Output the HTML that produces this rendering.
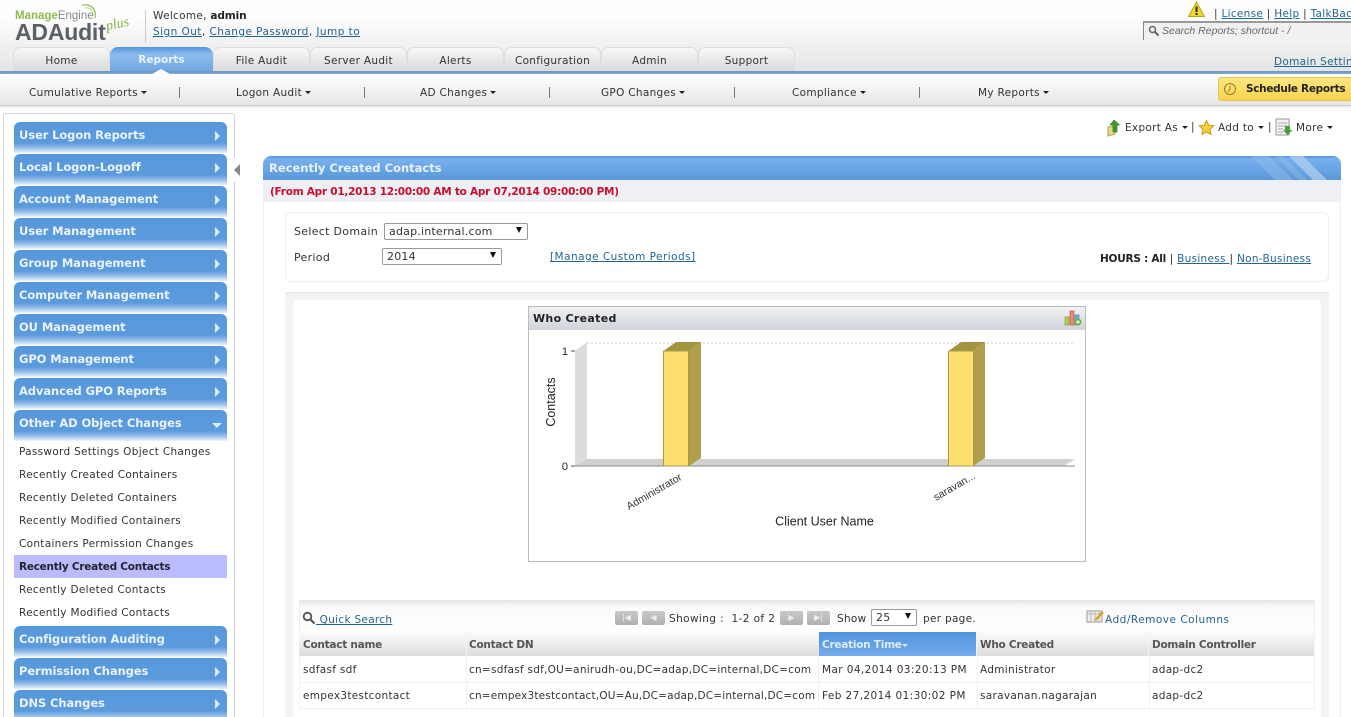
<!DOCTYPE html>
<html><head><meta charset="utf-8"><style>
html,body{margin:0;padding:0;width:1351px;height:717px;overflow:hidden;background:#fff}
body{font-family:"DejaVu Sans",Verdana,sans-serif;font-size:10.5px;color:#333;position:relative;letter-spacing:.3px}
svg{letter-spacing:0}
.a,.t{position:absolute}
.t{white-space:nowrap;line-height:14px}
a,.l{color:#24658f;text-decoration:underline}
.tab{position:absolute;top:47px;height:24px;width:95px;border:1px solid #ddd;border-bottom:0;border-radius:7px 7px 0 0;background:linear-gradient(#f8f8f8,#d8d8d8);text-align:center;line-height:27px;color:#333;box-sizing:content-box}
.nv{position:absolute;left:14px;width:213px;height:31px;border-radius:6px 6px 0 0;background:linear-gradient(#5797dc 0,#5b9bdd 68%,#9cc3ea 85%,#eef5fc 100%);color:#eaf3fc;font-weight:bold;font-size:11.5px;line-height:26px;text-indent:5px;letter-spacing:-.1px}
.nv:after{content:"";position:absolute;right:7px;top:9px;border-left:5px solid #dcebf8;border-top:5px solid transparent;border-bottom:5px solid transparent}
.sub{position:absolute;left:19px;white-space:nowrap;color:#333;line-height:14px}
.nt{position:absolute;top:86px;white-space:nowrap;line-height:14px;color:#333}
.nt b,.ar{display:inline-block;border-top:3px solid #222;border-left:3px solid transparent;border-right:3px solid transparent;vertical-align:2px;margin-left:3px;font-size:0}
.sep{position:absolute;top:87px;height:11px;width:1px;background:#777}
.hd{position:absolute;top:632px;height:24px;background:linear-gradient(#fbfbfb,#dedede);font-weight:bold;color:#555;line-height:27px;text-indent:3px;border-right:1px solid #f3f3f3;box-sizing:border-box;letter-spacing:-.25px}
.cell{position:absolute;white-space:nowrap;line-height:14px;color:#333}
.sel{position:absolute;box-sizing:border-box;background:#fff;border:1px solid #999;border-radius:2px;height:17px;line-height:16px;font-size:11px;padding-left:4px;color:#333;letter-spacing:.2px}
.sel:after{content:"";position:absolute;right:5px;top:3px;border-top:6px solid #111;border-left:3px solid transparent;border-right:3px solid transparent}
.pg{position:absolute;top:611px;width:23px;height:14px;background:linear-gradient(#c9c9c9,#b0b0b0);border-radius:2px;color:#eee;font-size:8px;line-height:14px;text-align:center;letter-spacing:0}
</style></head><body>

<div class="a" style="left:0;top:0;width:1351px;height:72px;background:linear-gradient(#fff 0,#fdfdfd 25%,#e4e4e4 100%)"></div>

<!-- logo -->
<div class="t" style="left:15px;top:9px;font:bold 11.5px/14px 'Liberation Sans',sans-serif;color:#8fba4e;letter-spacing:0">Manage<span style="font-weight:normal;color:#888">Engine</span></div>
<svg class="a" style="left:78px;top:2px" width="24" height="20"><path d="M4 3C12 2 19 6 17 16" fill="none" stroke="#8fba4e" stroke-width="1.2"/><path d="M7 6C12 5 15 8 15 13" fill="none" stroke="#b9d48a" stroke-width="1"/></svg>
<div class="t" style="left:15px;top:20px;font:bold 23px/24px 'Liberation Sans',sans-serif;color:#5b6068;letter-spacing:-.2px">ADAudit</div>
<div class="t" style="left:106px;top:18px;font:italic 14px/14px 'Liberation Serif',serif;color:#86b344;transform:rotate(-12deg);letter-spacing:0">plus</div>
<div class="a" style="left:145px;top:10px;width:1px;height:33px;background:#ccc"></div>

<div class="t" style="left:153px;top:9px">Welcome, <b style="color:#222;letter-spacing:-.1px">admin</b></div>
<div class="t" style="left:153px;top:25px;color:#333;letter-spacing:.45px"><a>Sign Out</a>, <a>Change Password</a>, <a>Jump to</a></div>

<!-- top right -->
<svg class="a" style="left:1188px;top:1px" width="18" height="17"><path d="M8.500 1L16.500 15.500H.5Z" fill="#f2d72c" stroke="#b9a21d"/><rect x="7.600" y="5.500" width="1.900" height="5.500" fill="#222"/><rect x="7.600" y="12" width="1.900" height="2" fill="#222"/></svg>
<div class="t" style="left:1214px;top:7px">| <a>License</a> | <a>Help</a> | <a>TalkBack</a></div>
<div class="a" style="left:1143px;top:21px;width:208px;height:19px;box-sizing:border-box;border-left:1px solid #888;border-top:2px solid #999;background:#f1f1f1"></div>
<svg class="a" style="left:1148px;top:25px" width="12" height="12"><circle cx="4.500" cy="4.500" r="3" fill="none" stroke="#666" stroke-width="1.500"/><path d="M7 7L10.500 10.500" stroke="#666" stroke-width="2"/></svg>
<div class="t" style="left:1162px;top:24px;font:italic 10.5px/14px 'Liberation Sans',sans-serif;color:#666;letter-spacing:0">Search Reports; shortcut - /</div>
<div class="t l" style="left:1274px;top:55px">Domain Settings</div>

<!-- tabs -->
<div class="tab" style="left:13px">Home</div>
<div class="tab" style="left:213px">File Audit</div>
<div class="tab" style="left:310px">Server Audit</div>
<div class="tab" style="left:407px">Alerts</div>
<div class="tab" style="left:504px">Configuration</div>
<div class="tab" style="left:601px">Admin</div>
<div class="tab" style="left:698px">Support</div>
<div class="a" style="left:110px;top:47px;width:103px;height:25px;border-radius:8px 8px 0 0;background:linear-gradient(#4f95dc,#8dbcee 30%,#6fa6e0);text-align:center;line-height:27px;color:#e8f2fc;font-weight:bold;letter-spacing:0">Reports</div>

<div class="a" style="left:0;top:71px;width:1351px;height:3px;background:#6d9ac8"></div>
<div class="a" style="left:152px;top:69px;border-bottom:5px solid #fff;border-left:9px solid transparent;border-right:9px solid transparent"></div>

<!-- subnav -->
<div class="a" style="left:0;top:74px;width:1351px;height:31px;background:linear-gradient(#fff,#e6e6e6);border-bottom:1px solid #ccc;box-shadow:0 1px 3px #ddd"></div>
<div class="nt" style="left:29px">Cumulative Reports<b></b></div><div class="sep" style="left:179px"></div>
<div class="nt" style="left:236px">Logon Audit<b></b></div><div class="sep" style="left:364px"></div>
<div class="nt" style="left:420px">AD Changes<b></b></div><div class="sep" style="left:549px"></div>
<div class="nt" style="left:601px">GPO Changes<b></b></div><div class="sep" style="left:734px"></div>
<div class="nt" style="left:792px">Compliance<b></b></div><div class="sep" style="left:919px"></div>
<div class="nt" style="left:978px">My Reports<b></b></div>

<div class="a" style="left:1218px;top:77px;width:133px;height:24px;box-sizing:border-box;background:linear-gradient(#fde680,#fbd34e);border:1px solid #e5c354;border-right:0;border-radius:3px 0 0 3px"></div>
<svg class="a" style="left:1223px;top:82px" width="14" height="14"><circle cx="7" cy="7" r="5.500" fill="none" stroke="#9a7d1c"/><path d="M7 3.500V7L5 10" fill="none" stroke="#9a7d1c"/></svg>
<div class="t" style="left:1246px;top:82px;font-weight:bold;color:#222;letter-spacing:-.3px">Schedule Reports</div>

<!-- sidebar -->
<div class="a" style="left:3px;top:113px;width:232px;height:620px;box-sizing:border-box;border:1px solid #d2d2d2;border-radius:3px"></div>
<div class="a" style="left:231px;top:158px;width:9px;height:24px;background:#fff"></div>
<div class="a" style="left:234px;top:164px;border-right:6px solid #888;border-top:6px solid transparent;border-bottom:6px solid transparent"></div>

<div class="nv" style="top:122px">User Logon Reports</div>
<div class="nv" style="top:154px">Local Logon-Logoff</div>
<div class="nv" style="top:186px">Account Management</div>
<div class="nv" style="top:218px">User Management</div>
<div class="nv" style="top:250px">Group Management</div>
<div class="nv" style="top:282px">Computer Management</div>
<div class="nv" style="top:314px">OU Management</div>
<div class="nv" style="top:346px">GPO Management</div>
<div class="nv" style="top:378px">Advanced GPO Reports</div>
<div class="nv" style="top:410px">Other AD Object Changes</div>
<div class="a" style="left:212px;top:423px;border-top:5px solid #dcebf8;border-left:5px solid transparent;border-right:5px solid transparent;z-index:3"></div>
<div class="a" style="left:214px;top:416px;width:12px;height:12px;background:#5b9bdd;z-index:2"></div>

<div class="sub" style="top:445px">Password Settings Object Changes</div>
<div class="sub" style="top:468px">Recently Created Containers</div>
<div class="sub" style="top:491px">Recently Deleted Containers</div>
<div class="sub" style="top:514px">Recently Modified Containers</div>
<div class="sub" style="top:537px">Containers Permission Changes</div>
<div class="a" style="left:14px;top:555px;width:213px;height:23px;background:#bbbcfd"></div>
<div class="sub" style="top:560px;font-weight:bold;color:#223;letter-spacing:-.25px">Recently Created Contacts</div>
<div class="sub" style="top:583px">Recently Deleted Contacts</div>
<div class="sub" style="top:606px">Recently Modified Contacts</div>

<div class="nv" style="top:626px">Configuration Auditing</div>
<div class="nv" style="top:658px">Permission Changes</div>
<div class="nv" style="top:690px">DNS Changes</div>

<!-- actions -->
<svg class="a" style="left:1106px;top:119px" width="16" height="18"><path d="M2 8L9 7 9 15 2 17Z" fill="#e8d98a" stroke="#b5a33e"/><path d="M8 1L13.500 6H11V13H7V6H4Z" fill="#3f9b2c" stroke="#2a6d1d" stroke-width=".6"/></svg>
<div class="t" style="left:1125px;top:121px">Export As<span class="ar" style="margin-left:4px"></span></div>
<div class="t" style="left:1191px;top:120px">|</div>
<svg class="a" style="left:1198px;top:119px" width="17" height="17"><path d="M8.500 1.500L10.700 6.200 15.800 6.800 12 10.300 13 15.400 8.500 12.900 4 15.400 5 10.300 1.200 6.800 6.300 6.200Z" fill="#f6cf3d" stroke="#c79a1e"/></svg>
<div class="t" style="left:1218px;top:121px">Add to<span class="ar" style="margin-left:4px"></span></div>
<div class="t" style="left:1268px;top:120px">|</div>
<svg class="a" style="left:1275px;top:118px" width="18" height="18"><rect x="1" y="1" width="13" height="16" fill="#f3f3f3" stroke="#999"/><path d="M3 5H12M3 8H12M3 11H8M3 14H8" stroke="#aaa"/><path d="M10 8H15V12H17.500L12.500 17 8 12H10Z" fill="#4f9b35"/></svg>
<div class="t" style="left:1296px;top:121px">More<span class="ar" style="margin-left:4px"></span></div>

<!-- panel -->
<div class="a" style="left:263px;top:156px;width:1078px;height:24px;border-radius:8px 8px 0 0;background:linear-gradient(#4f94dd 0,#79b0ee 12%,#5a98da 100%);overflow:hidden;color:#e8f1fa;font-weight:bold;font-size:11.5px;line-height:25px;text-indent:6px;letter-spacing:0">Recently Created Contacts
<svg style="position:absolute;left:980px;top:0" width="98" height="24"><path d="M8 0H26L50 24H32Z" fill="#8bb9e8" opacity=".55"/><path d="M32 0H40L64 24H56Z" fill="#8bb9e8" opacity=".5"/><path d="M46 0H60L84 24H70Z" fill="#b5d2f0" opacity=".7"/></svg></div>
<div class="a" style="left:263px;top:180px;width:1078px;height:22px;background:#eef0f5"></div>
<div class="t" style="left:270px;top:185px;font-weight:bold;color:#c8102e;font-size:10.5px;letter-spacing:-.25px">(From Apr 01,2013 12:00:00 AM to Apr 07,2014 09:00:00 PM)</div>
<div class="a" style="left:263px;top:202px;width:1px;height:515px;background:#eee"></div>
<div class="a" style="left:1340px;top:202px;width:1px;height:515px;background:#eee"></div>

<!-- filter -->
<div class="a" style="left:285px;top:212px;width:1044px;height:70px;box-sizing:border-box;border:1px solid #eee;border-radius:6px"></div>
<div class="t" style="left:294px;top:225px;font-size:11px">Select Domain</div>
<div class="sel" style="left:384px;top:223px;width:144px">adap.internal.com</div>
<div class="t" style="left:294px;top:251px;font-size:11px">Period</div>
<div class="sel" style="left:382px;top:248px;width:120px">2014</div>
<div class="t l" style="left:550px;top:250px;letter-spacing:.46px">[Manage Custom Periods]</div>
<div class="t" style="left:1100px;top:252px;color:#222"><b style="letter-spacing:-.25px">HOURS : All</b> | <a>Business </a> | <a>Non-Business </a></div>

<!-- content -->
<div class="a" style="left:285px;top:292px;width:1044px;height:425px;background:#f3f3f3;border-top:1px solid #e8e8e8"></div>
<div class="a" style="left:293px;top:300px;width:1028px;height:417px;background:#fff;border-radius:5px 5px 0 0"></div>

<!-- chart box -->
<div class="a" style="left:528px;top:306px;width:558px;height:256px;box-sizing:border-box;border:1px solid #bbb;background:#fff"></div>
<div class="a" style="left:529px;top:307px;width:556px;height:23px;background:linear-gradient(#f1f2f4,#cfd4db)"></div>
<div class="t" style="left:533px;top:312px;font-weight:bold;color:#222;font-size:11px">Who Created</div>
<svg class="a" style="left:1064px;top:309px" width="18" height="17"><rect x="1" y="8" width="4" height="8" fill="#b7cc55" stroke="#7c8f2c" stroke-width=".6"/><rect x="6" y="2" width="4" height="14" fill="#e98a7a" stroke="#b24b3b" stroke-width=".6"/><rect x="11" y="6" width="4" height="10" fill="#6eb3dc" stroke="#3a7ba1" stroke-width=".6"/><circle cx="14" cy="13" r="3.500" fill="#6db33f"/><path d="M14 11V15M12 13H16" stroke="#fff"/></svg>

<svg class="a" style="left:528px;top:306px" width="558" height="256" font-family="Liberation Sans, sans-serif">
<g transform="translate(-528,-306)">
<path d="M575 351L587 342V459L575 466Z" fill="#dcdcdc"/>
<path d="M575 466L587 459H1075L1064 466Z" fill="#d0d0d0"/>
<path d="M587 343H1075" stroke="#ccc" stroke-dasharray="2 2" fill="none"/>
<path d="M575 466H1075" stroke="#888" fill="none"/>
<path d="M571 351H575M571 466H575" stroke="#555" fill="none"/>
<path d="M663.500 351L676 342H701L689 351Z" fill="#a39440"/>
<path d="M689 351L701 342V458L689 466Z" fill="#b09e4b"/>
<rect x="663.500" y="351" width="25" height="115" fill="#fde070" stroke="#a89a4c"/>
<path d="M948.500 351L961 342H985L973 351Z" fill="#a39440"/>
<path d="M973 351L985 342V458L973 466Z" fill="#b09e4b"/>
<rect x="948.500" y="351" width="25" height="115" fill="#fde070" stroke="#a89a4c"/>
<text x="568" y="355" font-size="11" text-anchor="end" fill="#222">1</text>
<text x="568" y="470" font-size="11" text-anchor="end" fill="#222">0</text>
<text transform="translate(555,402) rotate(-90)" font-size="12.500" text-anchor="middle" fill="#222">Contacts</text>
<text x="824.500" y="525.500" font-size="12.500" text-anchor="middle" fill="#222">Client User Name</text>
<text transform="translate(629,510) rotate(-30)" font-size="10.500" fill="#333">Administrator</text>
<text transform="translate(936,501) rotate(-30)" font-size="10.500" fill="#333">saravan...</text>
</g></svg>

<!-- table toolbar -->
<div class="a" style="left:299px;top:600px;width:1016px;height:32px;box-sizing:border-box;background:linear-gradient(#e3e3e3 0,#f9f9f9 6px,#fff 100%);border-right:1px solid #eee;border-left:1px solid #eee"></div>
<svg class="a" style="left:302px;top:611px" width="14" height="14"><circle cx="5.500" cy="5.500" r="3.800" fill="none" stroke="#555" stroke-width="1.800"/><path d="M8.500 8.500L12.500 12.500" stroke="#555" stroke-width="2.200"/></svg>
<div class="t" style="left:316px;top:613px"><span class="l">&nbsp;Quick Search</span></div>
<div class="pg" style="left:615px">|◀</div>
<div class="pg" style="left:642px">◀</div>
<div class="t" style="left:669px;top:612px;letter-spacing:.4px">Showing :&nbsp; 1-2 of 2</div>
<div class="pg" style="left:780px">▶</div>
<div class="pg" style="left:807px">▶|</div>
<div class="t" style="left:837px;top:612px">Show</div>
<div class="sel" style="left:871px;top:609px;width:46px">25</div>
<div class="t" style="left:923px;top:612px">per page.</div>
<svg class="a" style="left:1086px;top:609px" width="20" height="15"><rect x="1" y="2" width="15" height="11" fill="#eee" stroke="#999"/><path d="M1 5H16M5 2V13M9 2V13M13 2V13" stroke="#bbb"/><path d="M8 11L16 2 18 4 10 12Z" fill="#d9a520"/></svg>
<div class="t" style="left:1105px;top:613px;color:#24658f;letter-spacing:.5px">Add/Remove Columns</div>

<!-- table -->
<div class="hd" style="left:299px;width:168px;text-indent:4px">Contact name</div>
<div class="hd" style="left:467px;width:352px;border-right:0;text-indent:2px">Contact DN</div>
<div class="hd" style="left:819px;width:158px;background:linear-gradient(#4f94dc,#74aaea);color:#dcebfb">Creation Time<span class="ar" style="margin:0;border-top-color:#dcebfb;vertical-align:1px;text-indent:0"></span></div>
<div class="hd" style="left:977px;width:172px">Who Created</div>
<div class="hd" style="left:1149px;width:166px">Domain Controller</div>

<div class="a" style="left:299px;top:682px;width:1016px;height:1px;background:#f0f0f0"></div>
<div class="a" style="left:299px;top:708px;width:1016px;height:1px;background:#f0f0f0"></div>
<div class="a" style="left:299px;top:656px;width:1px;height:52px;background:#f2f2f2"></div>
<div class="a" style="left:466px;top:656px;width:1px;height:52px;background:#f2f2f2"></div>
<div class="a" style="left:818px;top:656px;width:1px;height:52px;background:#f2f2f2"></div>
<div class="a" style="left:977px;top:656px;width:1px;height:52px;background:#f2f2f2"></div>
<div class="a" style="left:1149px;top:656px;width:1px;height:52px;background:#f2f2f2"></div>
<div class="a" style="left:1314px;top:656px;width:1px;height:52px;background:#f2f2f2"></div>

<div class="cell" style="left:303px;top:663px">sdfasf sdf</div>
<div class="cell" style="left:469px;top:663px;letter-spacing:.25px">cn=sdfasf sdf,OU=anirudh-ou,DC=adap,DC=internal,DC=com</div>
<div class="cell" style="left:822px;top:663px;letter-spacing:.4px">Mar 04,2014 03:20:13 PM</div>
<div class="cell" style="left:980px;top:663px">Administrator</div>
<div class="cell" style="left:1152px;top:663px">adap-dc2</div>
<div class="cell" style="left:303px;top:689px">empex3testcontact</div>
<div class="cell" style="left:469px;top:689px;letter-spacing:.18px">cn=empex3testcontact,OU=Au,DC=adap,DC=internal,DC=com</div>
<div class="cell" style="left:822px;top:689px;letter-spacing:.4px">Feb 27,2014 01:30:02 PM</div>
<div class="cell" style="left:980px;top:689px">saravanan.nagarajan</div>
<div class="cell" style="left:1152px;top:689px">adap-dc2</div>

</body></html>
